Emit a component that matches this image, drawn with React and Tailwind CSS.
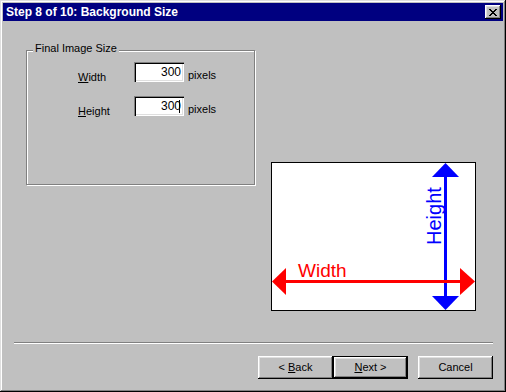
import React from 'react';

const raised = "shadow-[inset_-1px_-1px_0_#000,inset_1px_1px_0_#fff,inset_-2px_-2px_0_#808080,inset_2px_2px_0_#dfdfdf]";

function Btn({ children, isDefault }) {
  if (isDefault) {
    return (
      <div className="w-[75px] h-[23px] border border-black">
        <button className={`w-full h-full bg-[#c0c0c0] text-[11px] text-black flex items-center justify-center whitespace-pre ${raised}`}>
          {children}
        </button>
      </div>
    );
  }
  return (
    <button className={`w-[75px] h-[23px] bg-[#c0c0c0] text-[11px] text-black flex items-center justify-center whitespace-pre ${raised}`}>
      {children}
    </button>
  );
}

function Field({ label, value, caret }) {
  return (
    <div className="flex items-end h-[20px]">
      <span className="w-[56px] leading-none mb-[-1px]">{label}</span>
      <div className="relative w-[50px] h-[20px] bg-white flex items-center justify-end pr-[3px] shadow-[inset_1px_1px_0_#808080,inset_2px_2px_0_#000,inset_-1px_-1px_0_#fff,inset_-2px_-2px_0_#dfdfdf]">
        <span className="text-[12px] leading-none">{value}</span>
        {caret && <span className="absolute right-[4px] top-[4px] w-[1px] h-[13px] bg-black" />}
      </div>
      <span className="ml-[4px] mb-[1px] leading-none">pixels</span>
    </div>
  );
}

function Preview() {
  return (
    <svg width="203" height="147" viewBox="0 0 203 147">
      <rect x="172" y="14" width="3" height="119" fill="#0000ff" />
      <polygon points="173.5,0 160,14 187,14" fill="#0000ff" />
      <polygon points="173.5,147 160,133 187,133" fill="#0000ff" />
      <rect x="14" y="117" width="174" height="3" fill="#ff0000" />
      <polygon points="0,118.5 14,105 14,132" fill="#ff0000" />
      <polygon points="203,118.5 188,105 188,132" fill="#ff0000" />
      <text x="26" y="114" fill="#ff0000" fontSize="19" fontFamily="Liberation Sans, sans-serif">Width</text>
      <text x="169" y="82" fill="#0000ff" fontSize="20" fontFamily="Liberation Sans, sans-serif" transform="rotate(-90 169 82)">Height</text>
    </svg>
  );
}

export default function App() {
  return (
    <div className="w-[506px] h-[392px] bg-[#c0c0c0] p-[3px] flex flex-col font-['Liberation_Sans',sans-serif] text-[11px] text-black shadow-[inset_-1px_-1px_0_#000,inset_1px_1px_0_#dfdfdf,inset_-2px_-2px_0_#808080,inset_2px_2px_0_#fff]">
      {/* title bar */}
      <div className="h-[18px] bg-[#000080] flex items-center justify-between pl-[3px] pr-[2px]">
        <span className="text-white font-bold text-[12px] leading-none">Step 8 of 10: Background Size</span>
        <div className={`w-[16px] h-[14px] bg-[#c0c0c0] flex items-center justify-center ${raised}`}>
          <svg width="8" height="7" viewBox="0 0 8 7">
            <path d="M0 0h2v1h-2zM6 0h2v1h-2zM1 1h2v1h-2zM5 1h2v1h-2zM2 2h4v1h-4zM3 3h2v1h-2zM2 4h4v1h-4zM1 5h2v1h-2zM5 5h2v1h-2zM0 6h2v1h-2zM6 6h2v1h-2z" fill="#000" />
          </svg>
        </div>
      </div>

      {/* body */}
      <div className="flex-1 flex flex-col pl-[11px] pr-[10px]">
        <div className="flex items-start">
          <div className="relative ml-[12px] mt-[29px] w-[229px] h-[135px] border border-[#808080] shadow-[inset_1px_1px_0_#fff,1px_1px_0_#fff]">
            <span className="absolute -top-[8px] left-[6px] px-[2px] bg-[#c0c0c0] leading-none">Final Image Size</span>
            <div className="flex flex-col gap-[14px] pl-[51px] pt-[11px]">
              <Field label={<><u>W</u>idth</>} value="300" />
              <Field label={<><u>H</u>eight</>} value="300" caret />
            </div>
          </div>
          <div className="ml-[16px] mt-[141px] w-[205px] h-[149px] border border-black bg-white">
            <Preview />
          </div>
        </div>

        <div className="mt-[31px] border-t border-t-[#808080] border-b border-b-white" />

        <div className="mt-[12px] flex justify-end">
          <Btn>{"< "}<u>B</u>ack</Btn>
          <Btn isDefault><u>N</u>{"ext >"}</Btn>
          <div className="w-[10px]" />
          <Btn>Cancel</Btn>
        </div>
      </div>
    </div>
  );
}
